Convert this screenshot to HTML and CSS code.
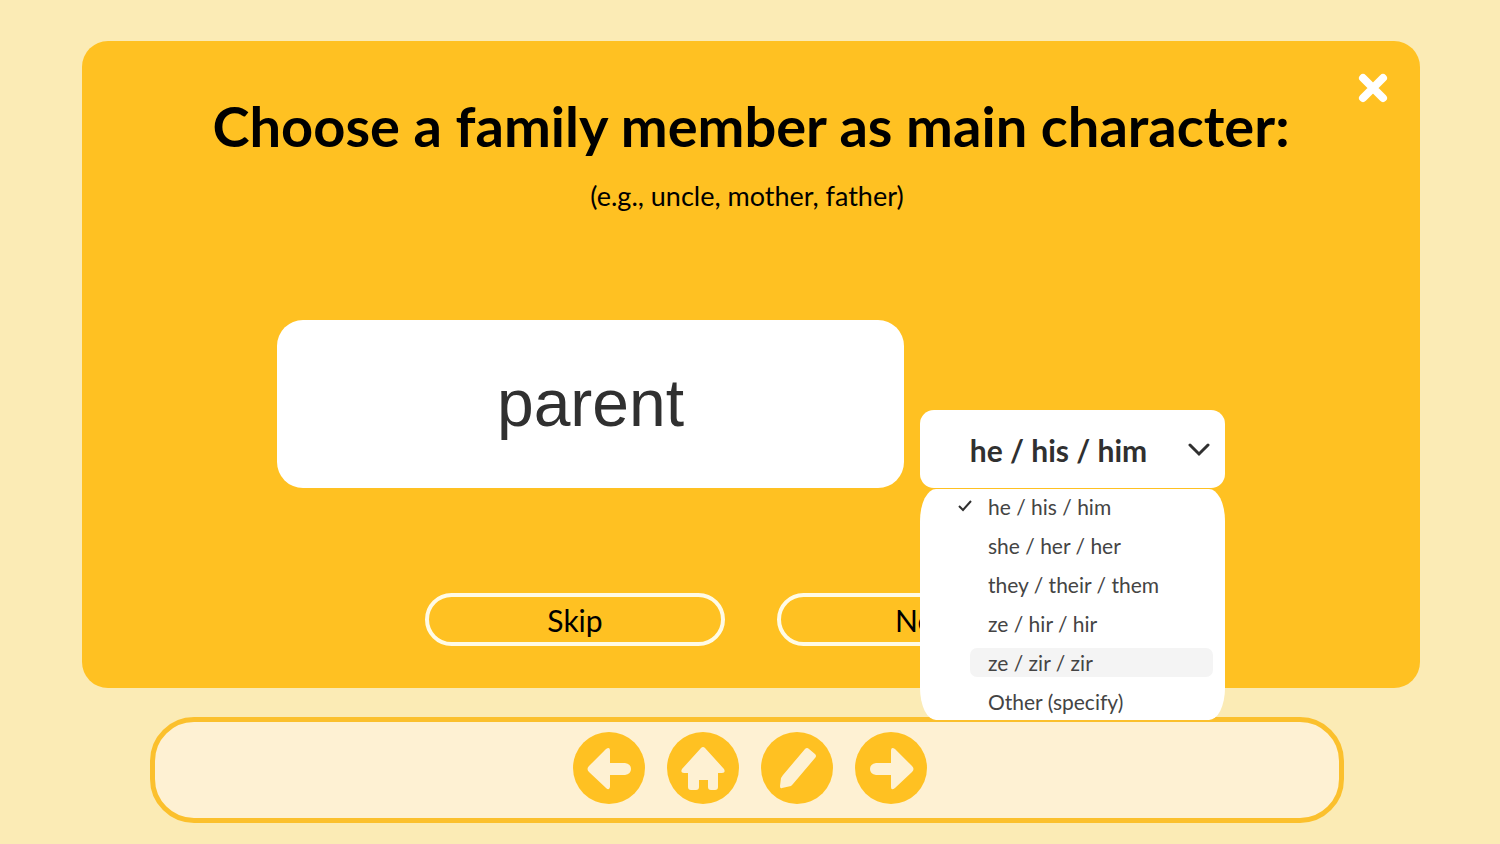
FILE: index.html
```
<!DOCTYPE html>
<html lang="en">
<head>
<meta charset="utf-8">
<meta name="viewport" content="width=device-width, initial-scale=1">
<title>Choose a family member</title>
<link rel="stylesheet" href="styles.css">
</head>
<body>
<main class="panel">
  <button class="close" type="button" aria-label="Close">
    <svg viewBox="0 0 30 30" aria-hidden="true"><path d="M5 5 25 25M25 5 5 25"/></svg>
  </button>
  <h1 class="title"><label for="member">Choose a family member as main character:</label></h1>
  <p class="hint">(e.g., uncle, mother, father)</p>
  <form class="form">
    <div class="fields">
      <input class="member" id="member" type="text" value="parent">
      <div class="pronouns">
        <select class="pronoun-select" aria-label="Pronouns">
          <option selected>he / his / him</option>
          <option>she / her / her</option>
          <option>they / their / them</option>
          <option>ze / hir / hir</option>
          <option>ze / zir / zir</option>
          <option>Other (specify)</option>
        </select>
        <svg class="chevron" viewBox="0 0 22 14" aria-hidden="true"><path d="M2 2 11 11 20 2"/></svg>
        <ul class="menu" role="listbox" aria-label="Pronoun choices">
          <li class="item" role="option" aria-selected="true"><svg class="check" viewBox="0 0 14 12" aria-hidden="true"><path d="M1 6 5 10 13 1"/></svg>he / his / him</li>
          <li class="item" role="option" aria-selected="false">she / her / her</li>
          <li class="item" role="option" aria-selected="false">they / their / them</li>
          <li class="item" role="option" aria-selected="false">ze / hir / hir</li>
          <li class="item item-active" role="option" aria-selected="false">ze / zir / zir</li>
          <li class="item" role="option" aria-selected="false">Other (specify)</li>
        </ul>
      </div>
    </div>
    <div class="actions">
      <button class="action" type="button">Skip</button>
      <button class="action" type="button">Next</button>
    </div>
  </form>
</main>
<nav class="toolbar" aria-label="Story navigation">
  <button class="tool" type="button" aria-label="Back">
    <svg viewBox="0 0 72 72" aria-hidden="true"><path d="M16 34 33 17Q37 14 37 19V31H52Q58 32 58 37Q58 42 52 43H37V55Q36 59 33 56L16 40Q13 37 16 34Z"/></svg>
  </button>
  <button class="tool" type="button" aria-label="Home">
    <svg viewBox="0 0 72 72" aria-hidden="true"><path d="M34 16Q36 14 38 16L57 37Q59 41 55 41H51V55Q51 58 48 58H44Q41 58 41 55V48H32V55Q32 58 29 58H24Q21 58 21 55V41H17Q13 41 15 37Z"/></svg>
  </button>
  <button class="tool" type="button" aria-label="Edit">
    <svg viewBox="0 0 72 72" aria-hidden="true"><path d="M44 17Q46 15 48 17L54 22Q56 24 54 26L32 52 30 54 21 56Q19 57 19 54L20 46 22 43Z"/></svg>
  </button>
  <button class="tool" type="button" aria-label="Forward">
    <svg viewBox="0 0 72 72" aria-hidden="true"><path d="M57 34 40 17Q36 14 36 19V31H21Q15 32 15 37Q15 42 21 43H36V55Q36 59 40 56L57 40Q60 37 57 34Z"/></svg>
  </button>
</nav>
</body>
</html>
```
FILE: styles.css
```
* {
  box-sizing: border-box;
}

body {
  margin: 0;
  padding: 41px 80px 21px 82px;
  background: #fbebb5;
  color: #000;
  font-family: Lato, "Open Sans", sans-serif;
}

button,
input,
select {
  font: inherit;
  color: inherit;
}

button {
  padding: 0;
  cursor: pointer;
}

.panel {
  position: relative;
  padding: 49px 0 42px;
  border-radius: 26px;
  background: #ffc122;
}

.close {
  position: absolute;
  top: 32px;
  right: 32px;
  width: 30px;
  height: 30px;
  border: 0;
  background: none;
}

.close svg {
  display: block;
  fill: none;
  stroke: #fff;
  stroke-width: 8;
  stroke-linecap: round;
}

.title {
  margin: 0;
  font-size: 56px;
  line-height: 72px;
  font-weight: 700;
  text-align: center;
}

.hint {
  margin: 16px 0 0;
  padding-right: 8px;
  font-size: 27px;
  line-height: 36px;
  text-align: center;
}

.fields {
  display: grid;
  grid-template-columns: 627fr 305fr;
  gap: 16px;
  align-items: end;
  margin: 106px 195px 0;
}

.member {
  width: 100%;
  height: 168px;
  padding: 0 0 2px;
  border: 0;
  border-radius: 26px;
  background: #fff;
  color: #303030;
  font-family: "Liberation Sans", Arial, sans-serif;
  font-size: 66px;
  text-align: center;
}

.pronouns {
  position: relative;
}

.pronoun-select {
  display: block;
  width: 100%;
  height: 78px;
  padding: 2px 76px 0 48px;
  border: 0;
  border-radius: 14px;
  appearance: none;
  background: #fff;
  color: #303030;
  font-size: 30px;
  font-weight: 700;
  text-align-last: center;
}

.chevron {
  position: absolute;
  top: 33px;
  right: 15px;
  width: 22px;
  height: 14px;
  fill: none;
  stroke: #303030;
  stroke-width: 3;
  stroke-linecap: round;
  pointer-events: none;
}

.menu {
  position: absolute;
  z-index: 1;
  top: calc(100% + 1px);
  left: 0;
  right: 0;
  display: grid;
  gap: 10px;
  margin: 0;
  padding: 3px 12px 4px 50px;
  border-radius: 16px / 32px;
  background: #fff;
  color: #444;
  list-style: none;
}

.item {
  position: relative;
  padding-left: 18px;
  border-radius: 7px;
  font-size: 21px;
  line-height: 29px;
  white-space: nowrap;
}

.item-active {
  background: #f4f4f4;
}

.check {
  position: absolute;
  top: 8px;
  left: -12px;
  width: 14px;
  height: 12px;
  fill: none;
  stroke: #303030;
  stroke-width: 2;
}

.actions {
  display: flex;
  justify-content: center;
  gap: 52px;
  margin-top: 105px;
}

.action {
  width: 300px;
  height: 53px;
  border: 4px solid #fffbe6;
  border-radius: 27px;
  background: none;
  font-size: 30px;
}

.toolbar {
  display: flex;
  justify-content: center;
  gap: 22px;
  margin: 29px 76px 0 68px;
  padding: 10px 0 14px 6px;
  border: 5px solid #fbc02d;
  border-radius: 44px;
  background: #fef1d3;
}

.tool {
  width: 72px;
  height: 72px;
  border: 0;
  border-radius: 50%;
  background: #ffc122;
}

.tool svg {
  display: block;
  fill: #fef1d3;
}
```
